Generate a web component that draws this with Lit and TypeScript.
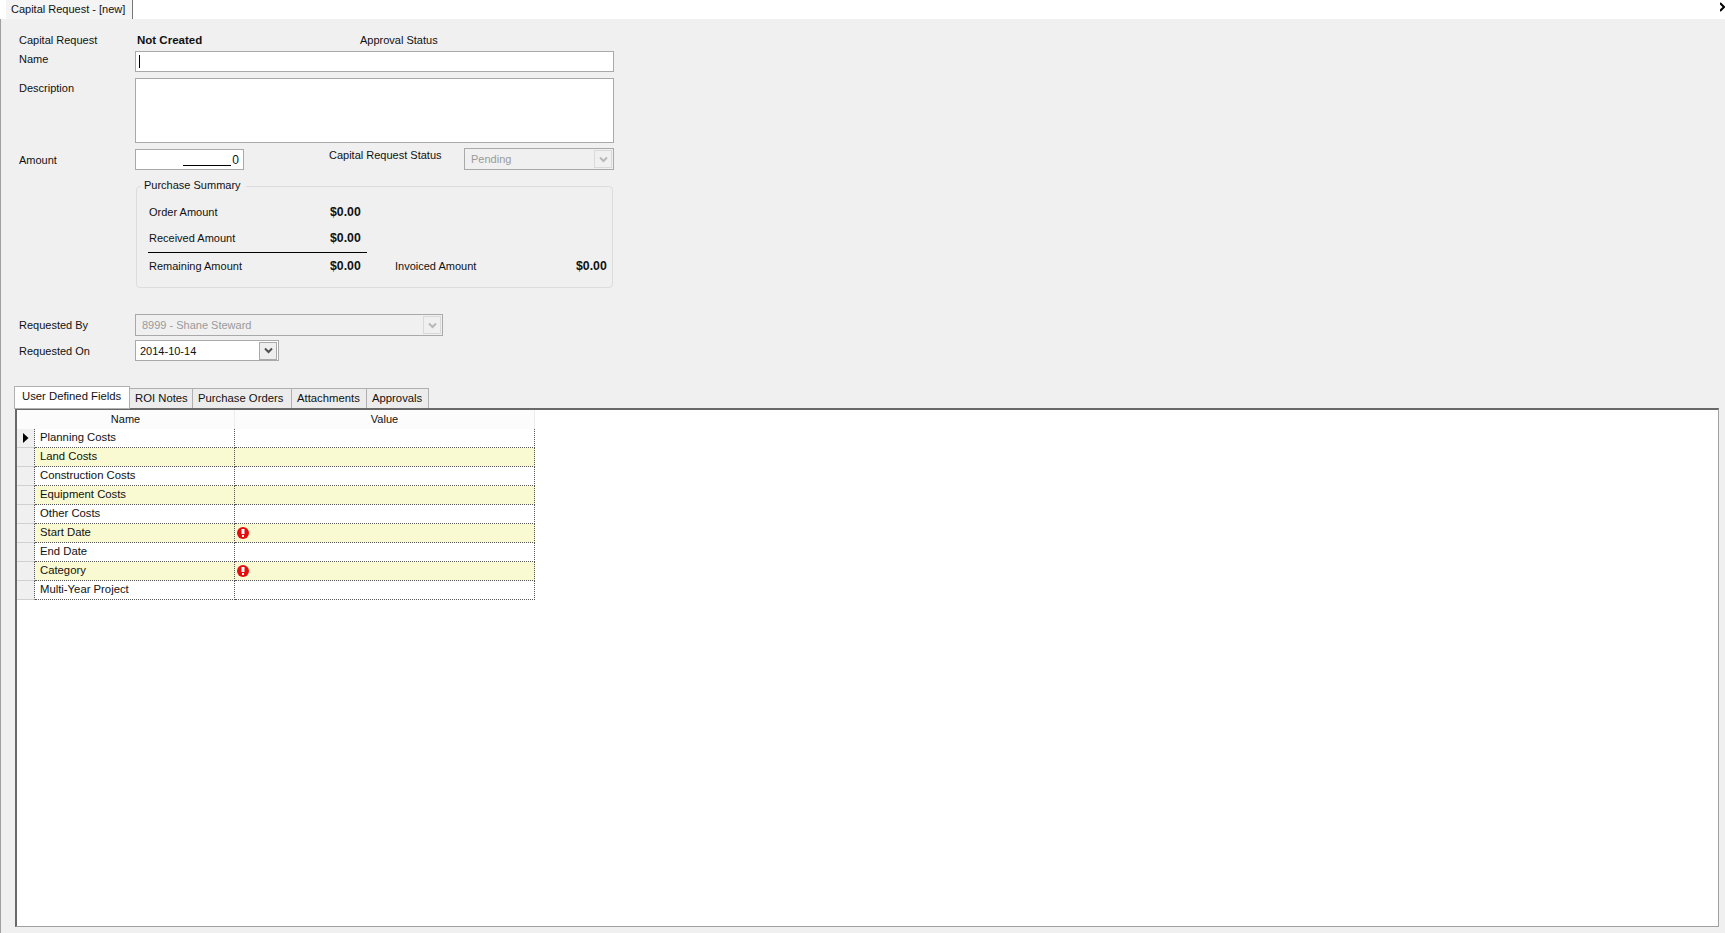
import { LitElement, html, css, svg } from "lit";
import { customElement } from "lit/decorators.js";

const chevron = (disabled: boolean) => html`<span class="btn ${disabled ? "off" : ""}"><svg width="9" height="7" viewBox="0 0 9 7"><path d="M1 1.5 L4.5 5 L8 1.5" fill="none" stroke="${disabled ? "#b8b8b8" : "#505050"}" stroke-width="2"/></svg></span>`;

const errorIcon = svg`<svg class="err" width="12" height="12" viewBox="0 0 12 12"><circle cx="6" cy="6" r="6" fill="#e60d0d"/><rect x="4.5" y="2" width="3" height="5" fill="#fff"/><rect x="5" y="8" width="2" height="2" fill="#fff"/></svg>`;

const rows: { name: string; err?: boolean }[] = [
  { name: "Planning Costs" },
  { name: "Land Costs" },
  { name: "Construction Costs" },
  { name: "Equipment Costs" },
  { name: "Other Costs" },
  { name: "Start Date", err: true },
  { name: "End Date" },
  { name: "Category", err: true },
  { name: "Multi-Year Project" },
];

const tabs = [
  { label: "ROI Notes", width: 63 },
  { label: "Purchase Orders", width: 99 },
  { label: "Attachments", width: 75 },
  { label: "Approvals", width: 62 },
];

@customElement("app-root")
export class AppRoot extends LitElement {
  static styles = css`
    :host {
      display: flex;
      flex-direction: column;
      box-sizing: border-box;
      width: 100%;
      height: 933px;
      overflow: hidden;
      background: #f0f0f0;
      font-family: "Liberation Sans", Arial, sans-serif;
      font-size: 11px;
      color: #111;
    }
    .topbar {
      flex: none;
      height: 19px;
      background: #fff;
      display: flex;
      justify-content: space-between;
    }
    .doc-tab {
      margin-left: 6px;
      width: 127px;
      padding-left: 5px;
      box-sizing: border-box;
      background: #f4f4f4;
      border-right: 1px solid #777;
      line-height: 18px;
      white-space: nowrap;
    }
    .close { display: block; }
    .main {
      flex: 1;
      min-height: 0;
      display: flex;
      flex-direction: column;
      border-left: 1px solid #a0a0a0;
    }
    .form { padding: 11px 0 0 18px; width: 596px; }
    .row { display: flex; }
    .label { width: 116px; flex: none; line-height: 16px; white-space: nowrap; }
    .head { height: 21px; line-height: 21px; }
    .head .label { line-height: 21px; }
    .strong { font-weight: 700; font-size: 11.5px; padding-left: 2px; width: 223px; flex: none; box-sizing: content-box; }
    .field {
      box-sizing: border-box;
      border: 1px solid #a9a9a9;
      background: #fff;
      flex: none;
    }
    .name-field { width: 479px; height: 21px; padding: 3px 0 0 3px; }
    .caret { display: block; width: 1px; height: 13px; background: #000; }
    .desc-row { margin-top: 6px; }
    .desc-row .label { padding-top: 2px; }
    .desc-field { width: 479px; height: 65px; }
    .amount-row { margin-top: 5px; height: 22px; }
    .amount-row > .label:first-child { padding-top: 4px; }
    .amount-field {
      width: 109px;
      height: 21px;
      margin-top: 1px;
      display: flex;
      justify-content: flex-end;
      align-items: center;
      padding-right: 4px;
      font-size: 12px;
    }
    .amount-field .blank {
      width: 48px;
      height: 12px;
      border-bottom: 1px solid #000;
      margin-right: 1px;
    }
    .status-label { width: 135px; margin-left: 85px; line-height: 15px; }
    .select {
      box-sizing: border-box;
      border: 1px solid #a9a9a9;
      height: 22px;
      flex: none;
      display: flex;
      align-items: center;
      justify-content: space-between;
      padding: 0 1px 0 6px;
      white-space: nowrap;
    }
    .select.off { color: #9a9a9a; background: #f0f0f0; }
    .select.on { background: #fff; padding-left: 4px; height: 21px; }
    .btn {
      box-sizing: border-box;
      width: 18px;
      height: 18px;
      border: 1px solid #a9a9a9;
      background: #eee;
      display: flex;
      align-items: center;
      justify-content: center;
    }
    .btn.off { border-color: #d9d9d9; background: #f0f0f0; }
    .status-select { width: 150px; }
    .group {
      position: relative;
      box-sizing: border-box;
      margin: 16px 0 0 117px;
      width: 477px;
      height: 102px;
      border: 1px solid #dcdcdc;
      border-radius: 4px;
      padding: 17px 0 0 12px;
    }
    .legend {
      position: absolute;
      left: 4px;
      top: -10px;
      padding: 0 5px 0 3px;
      background: #f0f0f0;
      line-height: 16px;
      white-space: nowrap;
    }
    .sum { display: flex; line-height: 16px; }
    .sum + .sum { margin-top: 10px; }
    .sum .k { width: 181px; flex: none; white-space: nowrap; }
    .sum .v { width: 65px; flex: none; font-weight: 700; font-size: 12.3px; }
    .sum .k2 { width: 181px; flex: none; white-space: nowrap; }
    .rule { height: 1px; width: 219px; margin: 6px 0 5px -1px; background: #000; }
    .rule + .sum { margin-top: 0; }
    .by-row { margin-top: 26px; }
    .by-row .label, .on-row .label { line-height: 22px; }
    .on-row { margin-top: 4px; }
    .by-select { width: 308px; }
    .on-select { width: 144px; }
    .tabs {
      flex: none;
      display: flex;
      align-items: flex-end;
      height: 22px;
      margin-top: 24px;
      padding-left: 13px;
      position: relative;
      z-index: 1;
      font-size: 11.3px;
    }
    .tab {
      box-sizing: border-box;
      height: 20px;
      line-height: 18px;
      background: #ececec;
      border: 1px solid #b0b0b0;
      border-bottom: 0;
      border-left: 0;
      padding-left: 5px;
      white-space: nowrap;
    }
    .tab.active {
      width: 116px;
      height: 23px;
      margin-bottom: -1px;
      background: #fff;
      border-left: 1px solid #b0b0b0;
      border-bottom: 1px solid #b0b0b0;
      padding: 0 0 0 7px;
      line-height: 19px;
    }
    .panel {
      flex: none;
      box-sizing: border-box;
      margin-left: 14px;
      width: 1704px;
      height: 519px;
      background: #fff;
      border-style: solid;
      border-color: #696969 #a0a0a0 #a0a0a0 #696969;
      border-width: 2px 1px 1px 2px;
    }
    .grid { width: 518px; display: grid; grid-template-columns: 18px 200px 300px; font-size: 11.3px; }
    .hcell {
      height: 19px;
      line-height: 19px;
      text-align: center;
      font-size: 11px;
      background: #fcfcfc;
      border-right: 1px solid #ececec;
      box-sizing: border-box;
    }
    .hname { grid-column: 1 / span 2; }
    .rh {
      box-sizing: border-box;
      height: 19px;
      background: #f0f0f0;
      border-right: 1px dotted #555;
      border-bottom: 1px solid #d0d0d0;
      display: flex;
      align-items: center;
      justify-content: center;
    }
    .c {
      box-sizing: border-box;
      height: 19px;
      line-height: 16px;
      border-bottom: 1px dotted #555;
      border-right: 1px dotted #555;
      padding-left: 5px;
      background: #fff;
      white-space: nowrap;
    }
    .y { background: #fafad2; }
    .val { padding-left: 2px; display: flex; align-items: center; }
    .err { display: block; }
  `;

  render() {
    return html`
      <div class="topbar">
        <div class="doc-tab">Capital Request - [new]</div>
        <svg class="close" width="5" height="12" viewBox="0 0 5 12"><path d="M0 4 L4 8 L0 12" transform="translate(0 -1)" fill="none" stroke="#000" stroke-width="2"/></svg>
      </div>
      <div class="main">
        <div class="form">
          <div class="row head">
            <div class="label">Capital Request</div>
            <div class="strong">Not Created</div>
            <div>Approval Status</div>
          </div>
          <div class="row">
            <div class="label">Name</div>
            <div class="field name-field"><span class="caret"></span></div>
          </div>
          <div class="row desc-row">
            <div class="label">Description</div>
            <div class="field desc-field"></div>
          </div>
          <div class="row amount-row">
            <div class="label">Amount</div>
            <div class="field amount-field"><span class="blank"></span><span>0</span></div>
            <div class="label status-label">Capital Request Status</div>
            <div class="select off status-select"><span>Pending</span>${chevron(true)}</div>
          </div>
          <div class="group">
            <div class="legend">Purchase Summary</div>
            <div class="sum"><span class="k">Order Amount</span><span class="v">$0.00</span></div>
            <div class="sum"><span class="k">Received Amount</span><span class="v">$0.00</span></div>
            <div class="rule"></div>
            <div class="sum">
              <span class="k">Remaining Amount</span><span class="v">$0.00</span>
              <span class="k2">Invoiced Amount</span><span class="v">$0.00</span>
            </div>
          </div>
          <div class="row by-row">
            <div class="label">Requested By</div>
            <div class="select off by-select"><span>8999 - Shane Steward</span>${chevron(true)}</div>
          </div>
          <div class="row on-row">
            <div class="label">Requested On</div>
            <div class="select on on-select"><span>2014-10-14</span>${chevron(false)}</div>
          </div>
        </div>
        <div class="tabs">
          <div class="tab active">User Defined Fields</div>
          ${tabs.map((t) => html`<div class="tab" style="width:${t.width}px">${t.label}</div>`)}
        </div>
        <div class="panel">
          <div class="grid">
            <div class="hcell hname">Name</div>
            <div class="hcell">Value</div>
            ${rows.map(
              (r, i) => html`
                <div class="rh">
                  ${i === 0
                    ? html`<svg width="6" height="10" viewBox="0 0 6 10"><path d="M0 0 L5.5 5 L0 10 Z" fill="#000"/></svg>`
                    : ""}
                </div>
                <div class="c ${i % 2 ? "y" : ""}">${r.name}</div>
                <div class="c val ${i % 2 ? "y" : ""}">${r.err ? errorIcon : ""}</div>
              `
            )}
          </div>
        </div>
      </div>
    `;
  }
}
